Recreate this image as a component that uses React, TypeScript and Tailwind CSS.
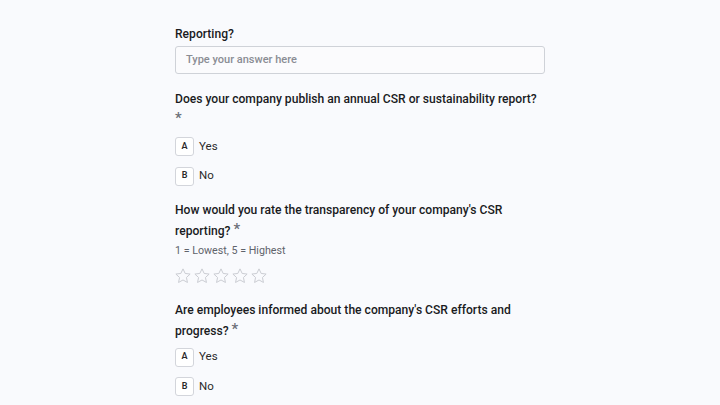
import React from 'react';

const Star = () => (
  <svg width="18" height="18" viewBox="0 0 24 24" fill="none" stroke="#c9cbd1" strokeWidth="1.3" strokeLinejoin="round">
    <path d="M12 2.5l2.9 6.1 6.6.8-4.9 4.6 1.3 6.6L12 17.3l-5.9 3.3 1.3-6.6-4.9-4.6 6.6-.8z" />
  </svg>
);

const Choice = ({ letter, label }: { letter: string; label: string }) => (
  <div className="flex items-center gap-[5px]">
    <div className="w-[19px] h-[19px] rounded-[3px] border border-[#d3d5db] bg-white flex items-center justify-center text-[9px] font-semibold text-[#2a2a2a]">
      {letter}
    </div>
    <span className="text-[11.5px] text-[#2a2a2a]">{label}</span>
  </div>
);

const Asterisk = () => <span className="text-[#6b6f78] text-[15px] align-[1px] ml-[3px]">*</span>;

export default function App() {
  return (
    <div className="w-[720px] h-[405px] overflow-hidden bg-[#f9fafd]" style={{ fontFamily: 'Roboto, "Noto Sans", sans-serif' }}>
      <div className="w-[370px] mx-auto pt-[25px]">
        <div>
          <p className="text-[12.1px] leading-[19px] font-medium text-[#1a1b1e]">Reporting?</p>
          <div className="mt-[2px] h-[28px] rounded-[3px] border border-[#cfd2d8] bg-[#fbfbfd] flex items-center px-[10px] text-[11px] font-medium text-[#8a8d94]">
            Type your answer here
          </div>
        </div>

        <div className="mt-[16px]">
          <p className="text-[12.1px] leading-[19px] font-medium text-[#1a1b1e]">
            Does your company publish an annual CSR or sustainability report?
            <br />
            <span className="text-[#6b6f78] text-[15px] align-[1px]">*</span>
          </p>
          <div className="mt-[7px] flex flex-col gap-[10.5px]">
            <Choice letter="A" label="Yes" />
            <Choice letter="B" label="No" />
          </div>
        </div>

        <div className="mt-[15px]">
          <p className="text-[12.1px] leading-[19px] font-medium text-[#1a1b1e]">
            How would you rate the transparency of your company's CSR reporting?
            <Asterisk />
          </p>
          <p className="mt-[2px] text-[10.7px] leading-[16px] text-[#5f636b]">1 = Lowest, 5 = Highest</p>
          <div className="mt-[8px] flex gap-[1px] -ml-[1px]">
            <Star />
            <Star />
            <Star />
            <Star />
            <Star />
          </div>
        </div>

        <div className="mt-[16px]">
          <p className="text-[12.1px] leading-[19px] font-medium text-[#1a1b1e]">
            Are employees informed about the company's CSR efforts and progress?
            <Asterisk />
          </p>
          <div className="mt-[7px] flex flex-col gap-[10.5px]">
            <Choice letter="A" label="Yes" />
            <Choice letter="B" label="No" />
          </div>
        </div>
      </div>
    </div>
  );
}
